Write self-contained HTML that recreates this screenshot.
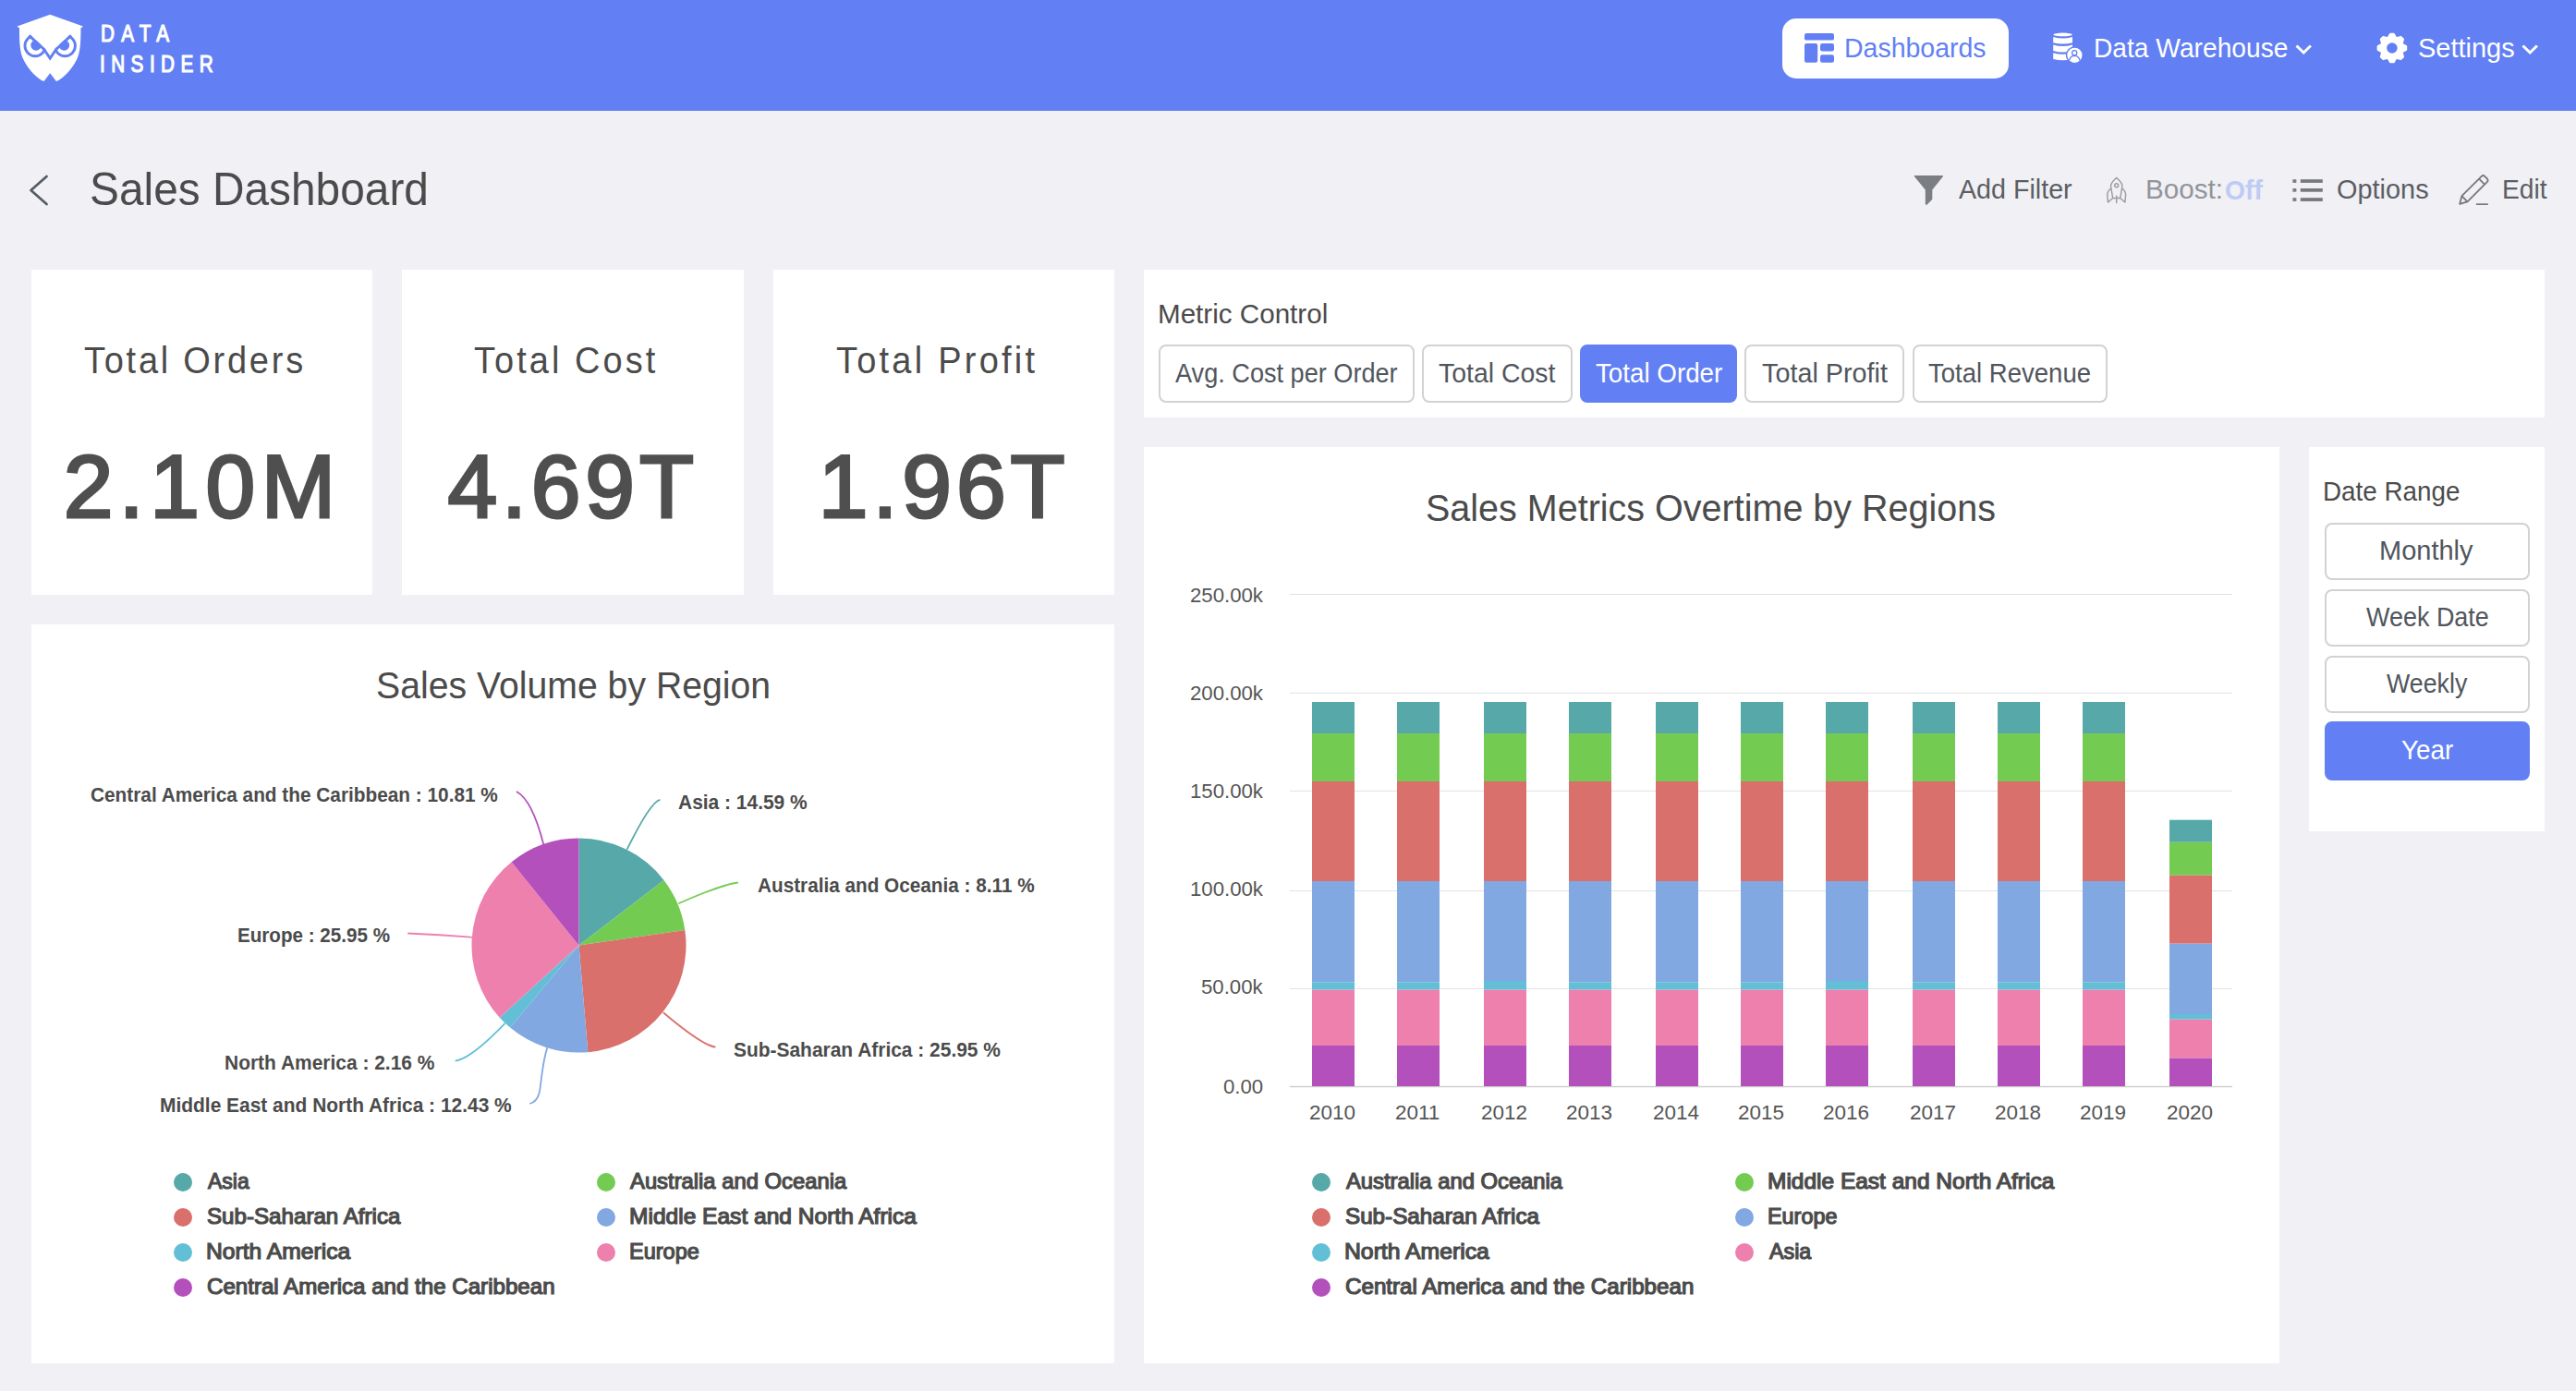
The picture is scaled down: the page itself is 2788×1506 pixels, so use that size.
<!DOCTYPE html>
<html><head><meta charset="utf-8"><title>Sales Dashboard</title>
<style>
html,body{margin:0;padding:0;width:2788px;height:1506px;overflow:hidden;background:#f0f0f5;font-family:"Liberation Sans",sans-serif;}
.a{position:absolute}
.t{position:absolute;white-space:nowrap;transform-origin:0 0;}
.panel{position:absolute;background:#fff}
.btn{position:absolute;box-sizing:border-box;border:2px solid #d2d2d2;border-radius:8px;background:#fff}
.btn.on{background:#6280f3;border-color:#6280f3}
svg{position:absolute;left:0;top:0}
</style></head><body>
<header class="a" style="left:0;top:0;width:2788px;height:120px;background:#6280f3"></header>
<div class="a" style="left:1928.8px;top:19.9px;width:245.2px;height:65px;border-radius:15px;background:#fff"></div>
<div class="panel" style="left:34px;top:292px;width:369px;height:352px"></div>
<div class="panel" style="left:435px;top:292px;width:370px;height:352px"></div>
<div class="panel" style="left:837px;top:292px;width:369px;height:352px"></div>
<div class="panel" style="left:1238px;top:292px;width:1516px;height:160px"></div>
<div class="panel" style="left:34px;top:676px;width:1172px;height:800px"></div>
<div class="panel" style="left:1238px;top:484px;width:1229px;height:992px"></div>
<div class="panel" style="left:2499px;top:484px;width:255px;height:416px"></div>
<div class="btn" style="left:1254.2px;top:373.1px;width:276.6px;height:62.7px"></div>
<div class="btn" style="left:1539.1px;top:373.1px;width:162.9px;height:62.7px"></div>
<div class="btn on" style="left:1710px;top:373.1px;width:170px;height:62.7px"></div>
<div class="btn" style="left:1888px;top:373.1px;width:173px;height:62.7px"></div>
<div class="btn" style="left:2069.5px;top:373.1px;width:211.5px;height:62.7px"></div>
<div class="btn" style="left:2515.5px;top:565.5px;width:222px;height:62.6px"></div>
<div class="btn" style="left:2515.5px;top:637.6px;width:222px;height:62.6px"></div>
<div class="btn" style="left:2515.5px;top:709.6px;width:222px;height:62.6px"></div>
<div class="btn on" style="left:2515.5px;top:781.2px;width:222px;height:63.4px"></div>
<svg width="2788" height="1506" viewBox="0 0 2788 1506">
<defs><clipPath id="brow"><polygon points="0,28.4 18.5,28.4 32.4,37.2 48.75,52.4 54.2,60.5 59.65,52.4 76,37.2 89.9,28.4 120,28.4 120,120 0,120"/></clipPath></defs>
<path d="M18.5,28.4 L54.2,15.8 L89.9,28.4 L87.4,30.5 C87.5,45 87,56 83.5,63.5 C80,71 74,79 67,84.5 C65,86 62.5,87.5 60.9,88 L54.2,79.2 L47.5,88 C45.9,87.5 43.4,86 41.4,84.5 C34.4,79 28.4,71 24.9,63.5 C21.4,56 20.9,45 21,30.5 Z" fill="#fff"/>
<g clip-path="url(#brow)" fill="none" stroke="#6280f3">
<circle cx="38.1" cy="49.6" r="11.15" stroke-width="2.9"/><circle cx="70.3" cy="49.6" r="11.15" stroke-width="2.9"/>
<polyline points="32.4,37.2 48.75,52.4 54.2,60.5 59.65,52.4 76,37.2" stroke-width="6" stroke-linejoin="miter"/>
<circle cx="39" cy="49" r="5.75" fill="#6280f3" stroke="none"/><circle cx="69.4" cy="49" r="5.75" fill="#6280f3" stroke="none"/>
</g>
<rect x="1953" y="36" width="32" height="7.6" rx="2.2" fill="#6280f3"/>
<rect x="1953" y="46.9" width="14.2" height="20.9" rx="2.2" fill="#6280f3"/>
<rect x="1970" y="46.9" width="15" height="8.6" rx="2.2" fill="#6280f3"/>
<rect x="1970" y="59.2" width="15" height="8.6" rx="2.2" fill="#6280f3"/>
<ellipse cx="2232.6" cy="37.4" rx="10.2" ry="1.8" fill="#fff"/>
<path d="M2222.2,40 Q2232.6,43 2243,40 L2243,46.2 Q2232.6,49 2222.2,46.2 Z" fill="#fff"/>
<path d="M2222.2,48.4 Q2232.6,51.4 2243,48.4 L2243,55 Q2232.6,58 2222.2,55 Z" fill="#fff"/>
<path d="M2222.2,57.3 Q2232.6,60.3 2243,57.3 L2243,64 Q2232.6,66.5 2222.2,64 Z" fill="#fff"/>
<circle cx="2245.4" cy="59.8" r="9.6" fill="#6280f3"/>
<circle cx="2245.4" cy="59.8" r="8.1" fill="#fff"/>
<circle cx="2245.2" cy="57.3" r="2.6" fill="none" stroke="#6280f3" stroke-width="1.3"/>
<path d="M2239.5,65.5 Q2240.5,60.5 2245.2,60.3 Q2250,60.5 2251,65.5" fill="none" stroke="#6280f3" stroke-width="1.3"/>
<path d="M2587.02,36.71 L2590.78,36.71 L2593.34,41.28 L2598.38,39.86 L2601.04,42.52 L2599.62,47.56 L2604.19,50.12 L2604.19,53.88 L2599.62,56.44 L2601.04,61.48 L2598.38,64.14 L2593.34,62.72 L2590.78,67.29 L2587.02,67.29 L2584.46,62.72 L2579.42,64.14 L2576.76,61.48 L2578.18,56.44 L2573.61,53.88 L2573.61,50.12 L2578.18,47.56 L2576.76,42.52 L2579.42,39.86 L2584.46,41.28 Z" fill="#fff" stroke="#fff" stroke-width="2" stroke-linejoin="round"/>
<circle cx="2588.9" cy="52" r="5.8" fill="#6280f3"/>
<path d="M2485.5,49.5 L2493.2,57 L2500.9,49.5" fill="none" stroke="#fff" stroke-width="3"/>
<path d="M2730.5,49.5 L2738.2,57 L2745.9,49.5" fill="none" stroke="#fff" stroke-width="3"/>
<path d="M50.5,191 L33.5,206 L50.5,221" fill="none" stroke="#555b63" stroke-width="2.7" stroke-linecap="round" stroke-linejoin="round"/>
<path d="M2072.4,190.6 L2102.4,190.6 L2090.6,205.3 L2090.6,215.4 L2085.2,221 L2084.5,221 L2084.5,205.3 Z" fill="#7b7e83" stroke="#7b7e83" stroke-width="1.4" stroke-linejoin="round"/>
<path d="M2290.7,192.4 C2288,195 2284.6,197.5 2284.5,201.5 L2286.7,214.5 L2294.7,214.5 L2296.9,201.5 C2296.8,197.5 2293.4,195 2290.7,192.4 Z M2284.6,204 C2282,206 2280.6,208 2280.8,211 L2281.5,219 L2286.7,214.5 M2296.8,204 C2299.4,206 2300.8,208 2300.6,211 L2299.9,219 L2294.7,214.5 M2290.7,212.3 L2290.7,219.5" fill="none" stroke="#9c9c9c" stroke-width="1.45" stroke-linejoin="round" stroke-linecap="round"/>
<circle cx="2290.7" cy="200.8" r="2.0" fill="none" stroke="#9c9c9c" stroke-width="1.4"/>
<rect x="2481.4" y="194.2" width="4" height="3.7" fill="#7b7e83"/>
<rect x="2489.8" y="194.2" width="24" height="3.7" fill="#76787c"/>
<rect x="2481.4" y="204" width="4" height="3.7" fill="#7b7e83"/>
<rect x="2489.8" y="204" width="24" height="3.7" fill="#76787c"/>
<rect x="2481.4" y="214.2" width="4" height="3.7" fill="#7b7e83"/>
<rect x="2489.8" y="214.2" width="24" height="3.7" fill="#76787c"/>
<path d="M2662.2,220.8 L2664.4,212.2 L2685.8,190.8 Q2687.5,189.2 2689.2,190.8 L2691.9,193.5 Q2693.4,195.2 2691.9,196.9 L2670.5,218.4 Z M2664.4,212.2 L2670.5,218.4 M2683,193.6 L2689.1,199.7" fill="none" stroke="#76787c" stroke-width="1.8" stroke-linejoin="round"/>
<rect x="2680" y="220.3" width="12.8" height="1.7" fill="#76787c"/>
<rect x="1396" y="643.0" width="1020" height="1" fill="#e2e2e2"/>
<rect x="1396" y="749.8" width="1020" height="1" fill="#e2e2e2"/>
<rect x="1396" y="855.9" width="1020" height="1" fill="#e2e2e2"/>
<rect x="1396" y="964.0" width="1020" height="1" fill="#e2e2e2"/>
<rect x="1396" y="1069.9" width="1020" height="1" fill="#e2e2e2"/>
<rect x="1396" y="1175.8" width="1020" height="1.4" fill="#cccccc"/>
<rect x="1420" y="760.00" width="46" height="34.00" fill="#57a9a9"/>
<rect x="1420" y="794.00" width="46" height="52.00" fill="#74cb52"/>
<rect x="1420" y="846.00" width="46" height="108.00" fill="#d9706c"/>
<rect x="1420" y="954.00" width="46" height="109.30" fill="#82a8e2"/>
<rect x="1420" y="1063.30" width="46" height="8.40" fill="#62bfd6"/>
<rect x="1420" y="1071.70" width="46" height="60.30" fill="#ee80ae"/>
<rect x="1420" y="1132.00" width="46" height="44.00" fill="#b350bc"/>
<rect x="1512" y="760.00" width="46" height="34.00" fill="#57a9a9"/>
<rect x="1512" y="794.00" width="46" height="52.00" fill="#74cb52"/>
<rect x="1512" y="846.00" width="46" height="108.00" fill="#d9706c"/>
<rect x="1512" y="954.00" width="46" height="109.30" fill="#82a8e2"/>
<rect x="1512" y="1063.30" width="46" height="8.40" fill="#62bfd6"/>
<rect x="1512" y="1071.70" width="46" height="60.30" fill="#ee80ae"/>
<rect x="1512" y="1132.00" width="46" height="44.00" fill="#b350bc"/>
<rect x="1606" y="760.00" width="46" height="34.00" fill="#57a9a9"/>
<rect x="1606" y="794.00" width="46" height="52.00" fill="#74cb52"/>
<rect x="1606" y="846.00" width="46" height="108.00" fill="#d9706c"/>
<rect x="1606" y="954.00" width="46" height="108.00" fill="#82a8e2"/>
<rect x="1606" y="1062.00" width="46" height="9.70" fill="#62bfd6"/>
<rect x="1606" y="1071.70" width="46" height="60.30" fill="#ee80ae"/>
<rect x="1606" y="1132.00" width="46" height="44.00" fill="#b350bc"/>
<rect x="1698" y="760.00" width="46" height="34.00" fill="#57a9a9"/>
<rect x="1698" y="794.00" width="46" height="52.00" fill="#74cb52"/>
<rect x="1698" y="846.00" width="46" height="108.00" fill="#d9706c"/>
<rect x="1698" y="954.00" width="46" height="109.30" fill="#82a8e2"/>
<rect x="1698" y="1063.30" width="46" height="8.40" fill="#62bfd6"/>
<rect x="1698" y="1071.70" width="46" height="60.30" fill="#ee80ae"/>
<rect x="1698" y="1132.00" width="46" height="44.00" fill="#b350bc"/>
<rect x="1792" y="760.00" width="46" height="34.00" fill="#57a9a9"/>
<rect x="1792" y="794.00" width="46" height="52.00" fill="#74cb52"/>
<rect x="1792" y="846.00" width="46" height="108.00" fill="#d9706c"/>
<rect x="1792" y="954.00" width="46" height="109.30" fill="#82a8e2"/>
<rect x="1792" y="1063.30" width="46" height="8.40" fill="#62bfd6"/>
<rect x="1792" y="1071.70" width="46" height="60.30" fill="#ee80ae"/>
<rect x="1792" y="1132.00" width="46" height="44.00" fill="#b350bc"/>
<rect x="1884" y="760.00" width="46" height="34.00" fill="#57a9a9"/>
<rect x="1884" y="794.00" width="46" height="52.00" fill="#74cb52"/>
<rect x="1884" y="846.00" width="46" height="108.00" fill="#d9706c"/>
<rect x="1884" y="954.00" width="46" height="109.30" fill="#82a8e2"/>
<rect x="1884" y="1063.30" width="46" height="8.40" fill="#62bfd6"/>
<rect x="1884" y="1071.70" width="46" height="60.30" fill="#ee80ae"/>
<rect x="1884" y="1132.00" width="46" height="44.00" fill="#b350bc"/>
<rect x="1976" y="760.00" width="46" height="34.00" fill="#57a9a9"/>
<rect x="1976" y="794.00" width="46" height="52.00" fill="#74cb52"/>
<rect x="1976" y="846.00" width="46" height="108.00" fill="#d9706c"/>
<rect x="1976" y="954.00" width="46" height="108.00" fill="#82a8e2"/>
<rect x="1976" y="1062.00" width="46" height="9.70" fill="#62bfd6"/>
<rect x="1976" y="1071.70" width="46" height="60.30" fill="#ee80ae"/>
<rect x="1976" y="1132.00" width="46" height="44.00" fill="#b350bc"/>
<rect x="2070" y="760.00" width="46" height="34.00" fill="#57a9a9"/>
<rect x="2070" y="794.00" width="46" height="52.00" fill="#74cb52"/>
<rect x="2070" y="846.00" width="46" height="108.00" fill="#d9706c"/>
<rect x="2070" y="954.00" width="46" height="109.30" fill="#82a8e2"/>
<rect x="2070" y="1063.30" width="46" height="8.40" fill="#62bfd6"/>
<rect x="2070" y="1071.70" width="46" height="60.30" fill="#ee80ae"/>
<rect x="2070" y="1132.00" width="46" height="44.00" fill="#b350bc"/>
<rect x="2162" y="760.00" width="46" height="34.00" fill="#57a9a9"/>
<rect x="2162" y="794.00" width="46" height="52.00" fill="#74cb52"/>
<rect x="2162" y="846.00" width="46" height="108.00" fill="#d9706c"/>
<rect x="2162" y="954.00" width="46" height="109.30" fill="#82a8e2"/>
<rect x="2162" y="1063.30" width="46" height="8.40" fill="#62bfd6"/>
<rect x="2162" y="1071.70" width="46" height="60.30" fill="#ee80ae"/>
<rect x="2162" y="1132.00" width="46" height="44.00" fill="#b350bc"/>
<rect x="2254" y="760.00" width="46" height="34.00" fill="#57a9a9"/>
<rect x="2254" y="794.00" width="46" height="52.00" fill="#74cb52"/>
<rect x="2254" y="846.00" width="46" height="108.00" fill="#d9706c"/>
<rect x="2254" y="954.00" width="46" height="109.30" fill="#82a8e2"/>
<rect x="2254" y="1063.30" width="46" height="8.40" fill="#62bfd6"/>
<rect x="2254" y="1071.70" width="46" height="60.30" fill="#ee80ae"/>
<rect x="2254" y="1132.00" width="46" height="44.00" fill="#b350bc"/>
<rect x="2348" y="887.70" width="46" height="24.10" fill="#57a9a9"/>
<rect x="2348" y="911.80" width="46" height="35.90" fill="#74cb52"/>
<rect x="2348" y="947.70" width="46" height="74.00" fill="#d9706c"/>
<rect x="2348" y="1021.70" width="46" height="76.30" fill="#82a8e2"/>
<rect x="2348" y="1098.00" width="46" height="5.70" fill="#62bfd6"/>
<rect x="2348" y="1103.70" width="46" height="42.00" fill="#ee80ae"/>
<rect x="2348" y="1145.70" width="46" height="30.30" fill="#b350bc"/>
<circle cx="1430" cy="1280" r="10" fill="#57a9a9"/>
<circle cx="1430" cy="1318" r="10" fill="#d9706c"/>
<circle cx="1430" cy="1356" r="10" fill="#62bfd6"/>
<circle cx="1430" cy="1394" r="10" fill="#b350bc"/>
<circle cx="1888" cy="1280" r="10" fill="#74cb52"/>
<circle cx="1888" cy="1318" r="10" fill="#82a8e2"/>
<circle cx="1888" cy="1356" r="10" fill="#ee80ae"/>
<path d="M626.5,1023.6 L626.50,907.60 A116,116 0 0 1 718.56,953.02 Z" fill="#57a9a9"/>
<path d="M626.5,1023.6 L718.56,953.02 A116,116 0 0 1 741.29,1006.89 Z" fill="#74cb52"/>
<path d="M626.5,1023.6 L741.29,1006.89 A116,116 0 0 1 636.33,1139.18 Z" fill="#d9706c"/>
<path d="M626.5,1023.6 L636.33,1139.18 A116,116 0 0 1 552.11,1112.61 Z" fill="#82a8e2"/>
<path d="M626.5,1023.6 L552.11,1112.61 A116,116 0 0 1 540.75,1101.72 Z" fill="#62bfd6"/>
<path d="M626.5,1023.6 L540.75,1101.72 A116,116 0 0 1 553.63,933.34 Z" fill="#ee80ae"/>
<path d="M626.5,1023.6 L553.63,933.34 A116,116 0 0 1 626.50,907.60 Z" fill="#b350bc"/>
<path d="M588.3,914.4 Q576,866 559,857" fill="none" stroke="#b350bc" stroke-width="1.8"/>
<path d="M678.6,919.7 Q704,868 714.4,865.8" fill="none" stroke="#57a9a9" stroke-width="1.8"/>
<path d="M734.2,978.3 Q780,958 798.8,955.5" fill="none" stroke="#74cb52" stroke-width="1.8"/>
<path d="M511.2,1014.8 Q476,1012 441.3,1010.5" fill="none" stroke="#ee80ae" stroke-width="1.8"/>
<path d="M717.9,1096.3 Q760,1132 774.5,1133.6" fill="none" stroke="#d9706c" stroke-width="1.8"/>
<path d="M546.6,1107.8 Q510,1146 492.6,1148.7" fill="none" stroke="#62bfd6" stroke-width="1.8"/>
<path d="M592.3,1134.4 C587,1150 586,1170 584,1182 C582,1190 578,1194 573.3,1194.8" fill="none" stroke="#82a8e2" stroke-width="1.8"/>
<circle cx="198" cy="1280" r="10" fill="#57a9a9"/>
<circle cx="198" cy="1318" r="10" fill="#d9706c"/>
<circle cx="198" cy="1356" r="10" fill="#62bfd6"/>
<circle cx="198" cy="1394" r="10" fill="#b350bc"/>
<circle cx="656" cy="1280" r="10" fill="#74cb52"/>
<circle cx="656" cy="1318" r="10" fill="#82a8e2"/>
<circle cx="656" cy="1356" r="10" fill="#ee80ae"/>
</svg>
<div class="t" style="left:108.56px;top:24px;font-size:25.94px;line-height:25.94px;color:#ffffff;-webkit-text-stroke:1.2px #ffffff;letter-spacing:9.090px;transform:scaleX(0.8);">DATA</div>
<div class="t" style="left:108.17px;top:57px;font-size:25.94px;line-height:25.94px;color:#ffffff;-webkit-text-stroke:1.2px #ffffff;letter-spacing:8.040px;transform:scaleX(0.8);">INSIDER</div>
<div class="t" style="left:1996.33px;top:38px;font-size:28.99px;line-height:28.99px;color:#6280f3;transform:scaleX(0.9825);">Dashboards</div>
<div class="t" style="left:2266.25px;top:38px;font-size:28.99px;line-height:28.99px;color:#ffffff;transform:scaleX(0.9725);">Data Warehouse</div>
<div class="t" style="left:2616.5px;top:38px;font-size:28.99px;line-height:28.99px;color:#ffffff;transform:scaleX(0.9998);">Settings</div>
<div class="t" style="left:97.37px;top:181px;font-size:49.57px;line-height:49.57px;color:#4b4b4b;transform:scaleX(0.9650);">Sales Dashboard</div>
<div class="t" style="left:2119.87px;top:191px;font-size:28.99px;line-height:28.99px;color:#5b5e63;transform:scaleX(0.9889);">Add Filter</div>
<div class="t" style="left:2321.93px;top:191px;font-size:28.99px;line-height:28.99px;color:#929499;transform:scaleX(1.0225);">Boost:</div>
<div class="t" style="left:2408.13px;top:192px;font-size:28.99px;line-height:28.99px;color:#becbf5;font-weight:bold;transform:scaleX(0.9751);">Off</div>
<div class="t" style="left:2529.26px;top:191px;font-size:28.99px;line-height:28.99px;color:#5b5e63;transform:scaleX(0.9972);">Options</div>
<div class="t" style="left:2708.35px;top:191px;font-size:28.99px;line-height:28.99px;color:#5b5e63;transform:scaleX(0.9736);">Edit</div>
<div class="t" style="left:91.39px;top:370px;font-size:40.87px;line-height:40.87px;color:#4b4b4b;letter-spacing:2.951px;transform:scaleX(0.93);">Total Orders</div>
<div class="t" style="left:512.69px;top:370px;font-size:40.87px;line-height:40.87px;color:#4b4b4b;letter-spacing:3.264px;transform:scaleX(0.93);">Total Cost</div>
<div class="t" style="left:904.79px;top:370px;font-size:40.87px;line-height:40.87px;color:#4b4b4b;letter-spacing:3.470px;transform:scaleX(0.93);">Total Profit</div>
<div class="t" style="left:68.63px;top:479px;font-size:96.52px;line-height:96.52px;color:#4f4f4f;-webkit-text-stroke:3px #4f4f4f;letter-spacing:6.539px;">2.10M</div>
<div class="t" style="left:484.48px;top:479px;font-size:96.52px;line-height:96.52px;color:#4f4f4f;-webkit-text-stroke:3px #4f4f4f;letter-spacing:4.905px;">4.69T</div>
<div class="t" style="left:885.8px;top:479px;font-size:96.52px;line-height:96.52px;color:#4f4f4f;-webkit-text-stroke:3px #4f4f4f;letter-spacing:4.975px;">1.96T</div>
<div class="t" style="left:1252.62px;top:326px;font-size:28.7px;line-height:28.7px;color:#4b4b4b;transform:scaleX(1.0319);">Metric Control</div>
<div class="t" style="left:1272.39px;top:390px;font-size:28.84px;line-height:28.84px;color:#51565d;transform:scaleX(0.9407);">Avg. Cost per Order</div>
<div class="t" style="left:1557.45px;top:390px;font-size:28.84px;line-height:28.84px;color:#51565d;transform:scaleX(0.9853);">Total Cost</div>
<div class="t" style="left:1726.67px;top:390px;font-size:28.84px;line-height:28.84px;color:#ffffff;transform:scaleX(0.9626);">Total Order</div>
<div class="t" style="left:1906.94px;top:390px;font-size:28.84px;line-height:28.84px;color:#51565d;transform:scaleX(0.9980);">Total Profit</div>
<div class="t" style="left:2087.27px;top:390px;font-size:28.84px;line-height:28.84px;color:#51565d;transform:scaleX(0.9553);">Total Revenue</div>
<div class="t" style="left:2514.47px;top:518px;font-size:28.7px;line-height:28.7px;color:#4b4b4b;transform:scaleX(0.9694);">Date Range</div>
<div class="t" style="left:2575.17px;top:582px;font-size:28.7px;line-height:28.7px;color:#51565d;transform:scaleX(1.0108);">Monthly</div>
<div class="t" style="left:2560.99px;top:654px;font-size:28.7px;line-height:28.7px;color:#51565d;transform:scaleX(0.9395);">Week Date</div>
<div class="t" style="left:2583px;top:726px;font-size:28.7px;line-height:28.7px;color:#51565d;transform:scaleX(0.9332);">Weekly</div>
<div class="t" style="left:2598.51px;top:798px;font-size:28.7px;line-height:28.7px;color:#ffffff;transform:scaleX(0.9712);">Year</div>
<div class="t" style="left:1543.03px;top:530px;font-size:41.16px;line-height:41.16px;color:#4b4b4b;transform:scaleX(0.9600);">Sales Metrics Overtime by Regions</div>
<div class="t" style="left:406.55px;top:722px;font-size:41.16px;line-height:41.16px;color:#4b4b4b;transform:scaleX(0.9525);">Sales Volume by Region</div>
<div class="t" style="left:97.8px;top:850px;font-size:22.61px;line-height:22.61px;color:#4b4b4b;font-weight:bold;transform:scaleX(0.9201);">Central America and the Caribbean : 10.81 %</div>
<div class="t" style="left:733.52px;top:858px;font-size:22.61px;line-height:22.61px;color:#4b4b4b;font-weight:bold;transform:scaleX(0.9264);">Asia : 14.59 %</div>
<div class="t" style="left:819.52px;top:948px;font-size:22.61px;line-height:22.61px;color:#4b4b4b;font-weight:bold;transform:scaleX(0.9171);">Australia and Oceania : 8.11 %</div>
<div class="t" style="left:257.4px;top:1002px;font-size:22.61px;line-height:22.61px;color:#4b4b4b;font-weight:bold;transform:scaleX(0.9117);">Europe : 25.95 %</div>
<div class="t" style="left:793.73px;top:1126px;font-size:22.61px;line-height:22.61px;color:#4b4b4b;font-weight:bold;transform:scaleX(0.9259);">Sub-Saharan Africa : 25.95 %</div>
<div class="t" style="left:243.38px;top:1140px;font-size:22.61px;line-height:22.61px;color:#4b4b4b;font-weight:bold;transform:scaleX(0.9266);">North America : 2.16 %</div>
<div class="t" style="left:173.48px;top:1186px;font-size:22.61px;line-height:22.61px;color:#4b4b4b;font-weight:bold;transform:scaleX(0.9257);">Middle East and North Africa : 12.43 %</div>
<div class="t" style="left:225.11px;top:1268px;font-size:23.19px;line-height:23.19px;color:#4b4b4b;-webkit-text-stroke:1.2px #4b4b4b;transform:scaleX(0.9909);">Asia</div>
<div class="t" style="left:224.15px;top:1306px;font-size:23.19px;line-height:23.19px;color:#4b4b4b;-webkit-text-stroke:1.2px #4b4b4b;transform:scaleX(1.0413);">Sub-Saharan Africa</div>
<div class="t" style="left:223.3px;top:1344px;font-size:23.19px;line-height:23.19px;color:#4b4b4b;-webkit-text-stroke:1.2px #4b4b4b;transform:scaleX(1.0630);">North America</div>
<div class="t" style="left:224.08px;top:1382px;font-size:23.19px;line-height:23.19px;color:#4b4b4b;-webkit-text-stroke:1.2px #4b4b4b;transform:scaleX(1.0396);">Central America and the Caribbean</div>
<div class="t" style="left:682.43px;top:1268px;font-size:23.19px;line-height:23.19px;color:#4b4b4b;-webkit-text-stroke:1.2px #4b4b4b;transform:scaleX(1.0265);">Australia and Oceania</div>
<div class="t" style="left:680.6px;top:1306px;font-size:23.19px;line-height:23.19px;color:#4b4b4b;-webkit-text-stroke:1.2px #4b4b4b;transform:scaleX(1.0583);">Middle East and North Africa</div>
<div class="t" style="left:680.66px;top:1344px;font-size:23.19px;line-height:23.19px;color:#4b4b4b;-webkit-text-stroke:1.2px #4b4b4b;transform:scaleX(1.0149);">Europe</div>
<div class="t" style="left:1456.83px;top:1268px;font-size:23.19px;line-height:23.19px;color:#4b4b4b;-webkit-text-stroke:1.2px #4b4b4b;transform:scaleX(1.0261);">Australia and Oceania</div>
<div class="t" style="left:1455.85px;top:1306px;font-size:23.19px;line-height:23.19px;color:#4b4b4b;-webkit-text-stroke:1.2px #4b4b4b;transform:scaleX(1.0443);">Sub-Saharan Africa</div>
<div class="t" style="left:1454.99px;top:1344px;font-size:23.19px;line-height:23.19px;color:#4b4b4b;-webkit-text-stroke:1.2px #4b4b4b;transform:scaleX(1.0671);">North America</div>
<div class="t" style="left:1455.78px;top:1382px;font-size:23.19px;line-height:23.19px;color:#4b4b4b;-webkit-text-stroke:1.2px #4b4b4b;transform:scaleX(1.0418);">Central America and the Caribbean</div>
<div class="t" style="left:1913.2px;top:1268px;font-size:23.19px;line-height:23.19px;color:#4b4b4b;-webkit-text-stroke:1.2px #4b4b4b;transform:scaleX(1.0559);">Middle East and North Africa</div>
<div class="t" style="left:1913.27px;top:1306px;font-size:23.19px;line-height:23.19px;color:#4b4b4b;-webkit-text-stroke:1.2px #4b4b4b;transform:scaleX(1.0081);">Europe</div>
<div class="t" style="left:1915.02px;top:1344px;font-size:23.19px;line-height:23.19px;color:#4b4b4b;-webkit-text-stroke:1.2px #4b4b4b;transform:scaleX(1.0039);">Asia</div>
<div class="t" style="left:1287.8px;top:634px;font-size:22.61px;line-height:22.61px;color:#555555;transform:scaleX(0.9814);">250.00k</div>
<div class="t" style="left:1287.8px;top:740px;font-size:22.61px;line-height:22.61px;color:#555555;transform:scaleX(0.9814);">200.00k</div>
<div class="t" style="left:1287.8px;top:846px;font-size:22.61px;line-height:22.61px;color:#555555;transform:scaleX(0.9814);">150.00k</div>
<div class="t" style="left:1287.8px;top:952px;font-size:22.61px;line-height:22.61px;color:#555555;transform:scaleX(0.9814);">100.00k</div>
<div class="t" style="left:1299.93px;top:1058px;font-size:22.61px;line-height:22.61px;color:#555555;transform:scaleX(0.9814);">50.00k</div>
<div class="t" style="left:1323.71px;top:1166px;font-size:22.61px;line-height:22.61px;color:#555555;transform:scaleX(0.9814);">0.00</div>
<div class="t" style="left:1416.79px;top:1194px;font-size:22.61px;line-height:22.61px;color:#555555;transform:scaleX(0.9942);">2010</div>
<div class="t" style="left:1509.76px;top:1194px;font-size:22.61px;line-height:22.61px;color:#555555;transform:scaleX(0.9942);">2011</div>
<div class="t" style="left:1602.89px;top:1194px;font-size:22.61px;line-height:22.61px;color:#555555;transform:scaleX(0.9942);">2012</div>
<div class="t" style="left:1694.84px;top:1194px;font-size:22.61px;line-height:22.61px;color:#555555;transform:scaleX(0.9942);">2013</div>
<div class="t" style="left:1788.68px;top:1194px;font-size:22.61px;line-height:22.61px;color:#555555;transform:scaleX(0.9942);">2014</div>
<div class="t" style="left:1880.83px;top:1194px;font-size:22.61px;line-height:22.61px;color:#555555;transform:scaleX(0.9942);">2015</div>
<div class="t" style="left:1972.84px;top:1194px;font-size:22.61px;line-height:22.61px;color:#555555;transform:scaleX(0.9942);">2016</div>
<div class="t" style="left:2066.89px;top:1194px;font-size:22.61px;line-height:22.61px;color:#555555;transform:scaleX(0.9942);">2017</div>
<div class="t" style="left:2158.84px;top:1194px;font-size:22.61px;line-height:22.61px;color:#555555;transform:scaleX(0.9942);">2018</div>
<div class="t" style="left:2250.87px;top:1194px;font-size:22.61px;line-height:22.61px;color:#555555;transform:scaleX(0.9942);">2019</div>
<div class="t" style="left:2344.79px;top:1194px;font-size:22.61px;line-height:22.61px;color:#555555;transform:scaleX(0.9942);">2020</div>
</body></html>
